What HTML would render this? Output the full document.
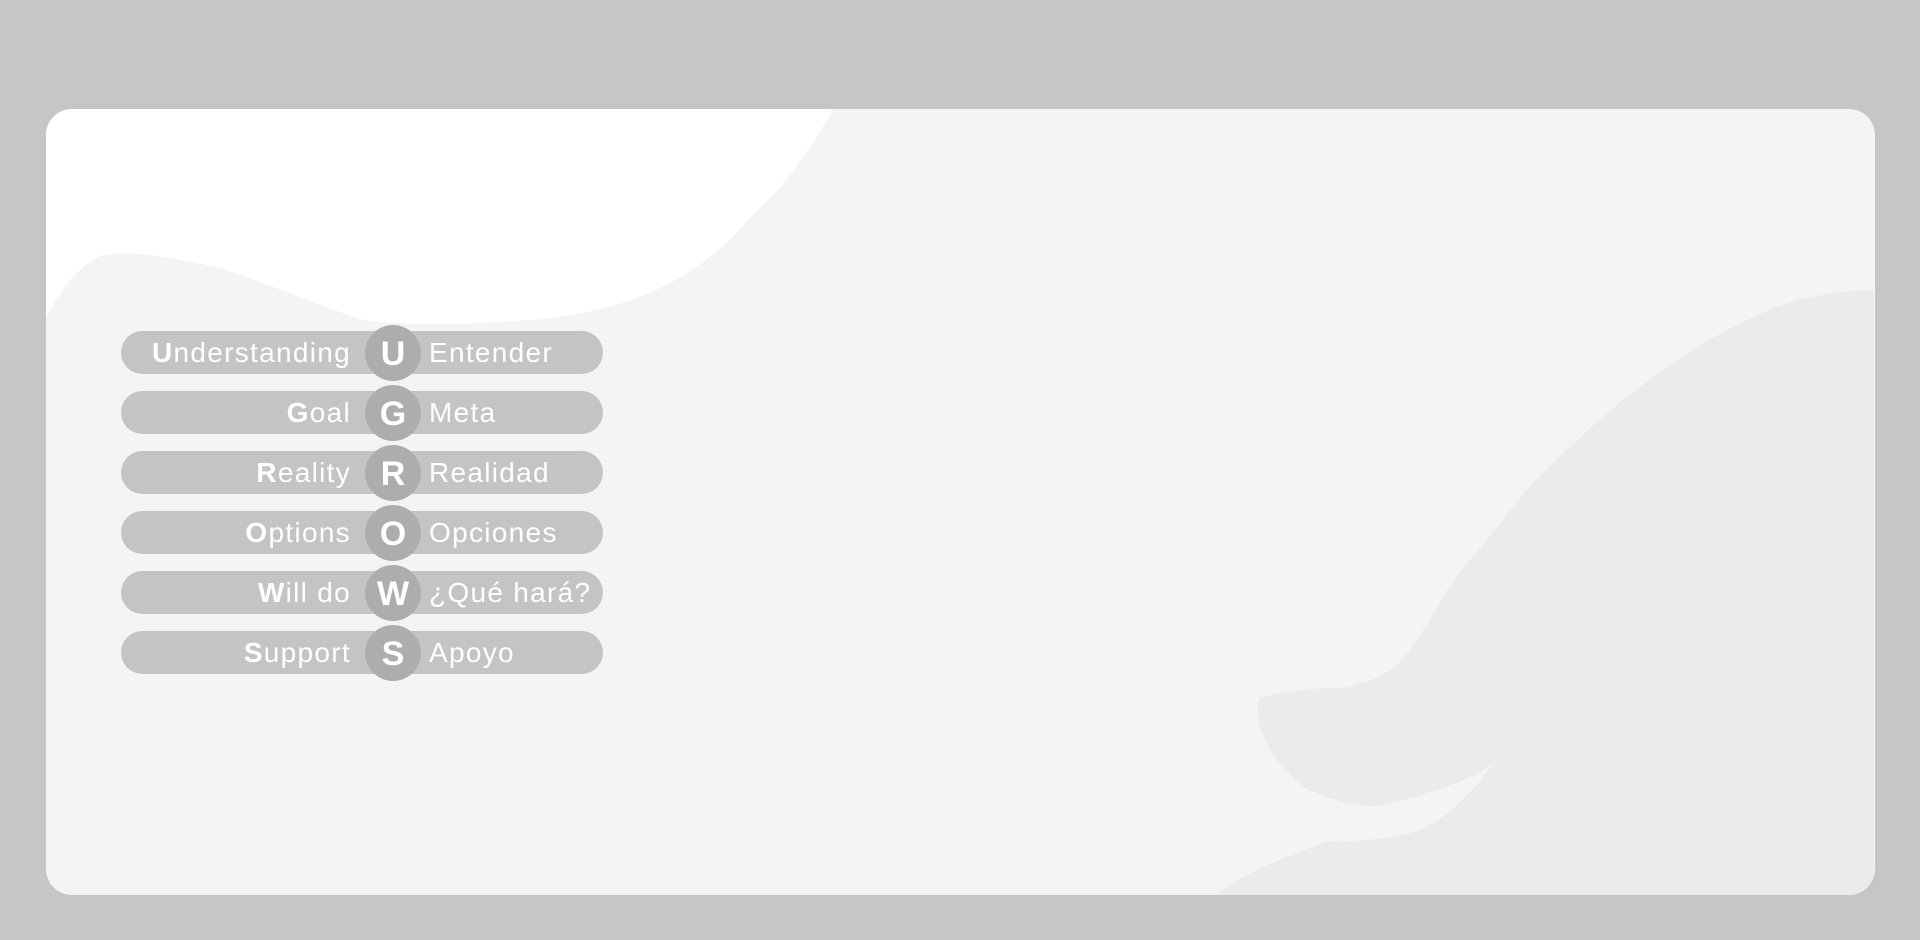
<!DOCTYPE html>
<html><head><style>
html,body{margin:0;padding:0;width:1920px;height:940px;background:#c6c6c6;overflow:hidden;font-family:"Liberation Sans",sans-serif}
.card{position:absolute;left:46px;top:109px;width:1829px;height:786px;border-radius:26px;background:#f4f4f4;overflow:hidden}
.card svg{position:absolute;left:0;top:0}
.row{position:absolute;left:121px;width:482px;height:43px;border-radius:22px;background:#c4c4c4;color:#fff;font-size:28px;letter-spacing:1.3px}
.l{position:absolute;right:252px;top:6px;white-space:nowrap}
.r{position:absolute;left:308px;top:6px;white-space:nowrap}
.c{position:absolute;left:244px;top:-6px;width:56px;height:56px;border-radius:50%;background:#adadad;text-align:center;line-height:58px;font-weight:bold;font-size:34px;letter-spacing:0}
b{font-weight:bold}
</style></head><body>
<div class="card">
<svg width="1829" height="786" viewBox="46 109 1829 786">
<path d="M46 109 L833 109 C805 160 780 190 759 208 C740 230 725 245 710 257 C680 280 650 295 612 306 C580 315 545 320 514 321 C460 325 410 325 367 321 C300 300 240 270 196 263 C160 255 120 250 98 257 C75 270 60 290 46 318 Z" fill="#ffffff"/>
<path d="M1874 290 C1800 292 1760 310 1692 350 C1640 385 1610 410 1587 431 C1550 465 1530 485 1516 503 C1480 550 1460 570 1446 592 C1425 630 1410 650 1399 664 C1370 685 1340 690 1329 688 C1290 690 1265 695 1258 700 C1255 730 1270 760 1305 788 C1340 805 1370 808 1381 805 C1430 795 1470 780 1493 764 C1460 810 1430 828 1411 833 C1370 842 1340 842 1329 841 C1290 855 1250 870 1215 895 L1874 895 Z" fill="#ebebeb"/>
</svg>
</div>
<div class="row" style="top:331px"><span class="l"><b>U</b>nderstanding</span><div class="c">U</div><span class="r">Entender</span></div>
<div class="row" style="top:391px"><span class="l"><b>G</b>oal</span><div class="c">G</div><span class="r">Meta</span></div>
<div class="row" style="top:451px"><span class="l"><b>R</b>eality</span><div class="c">R</div><span class="r">Realidad</span></div>
<div class="row" style="top:511px"><span class="l"><b>O</b>ptions</span><div class="c">O</div><span class="r">Opciones</span></div>
<div class="row" style="top:571px"><span class="l"><b>W</b>ill do</span><div class="c">W</div><span class="r">¿Qué hará?</span></div>
<div class="row" style="top:631px"><span class="l"><b>S</b>upport</span><div class="c">S</div><span class="r">Apoyo</span></div>
</body></html>
